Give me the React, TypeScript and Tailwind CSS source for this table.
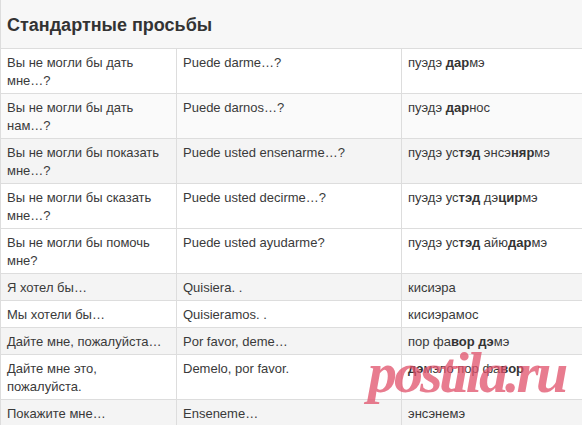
import React from "react";

type Part = string | { b: string };

const rows: { ru: string; es: string; tr: Part[]; bg: string }[] = [
  { ru: "Вы не могли бы дать мне…?", es: "Puede darme…?", tr: ["пуэдэ ", { b: "дар" }, "мэ"], bg: "bg-white" },
  { ru: "Вы не могли бы дать нам…?", es: "Puede darnos…?", tr: ["пуэдэ ", { b: "дар" }, "нос"], bg: "bg-[#fafafa]" },
  { ru: "Вы не могли бы показать мне…?", es: "Puede usted ensenarme…?", tr: ["пуэдэ ус", { b: "тэд" }, " энсэ", { b: "няр" }, "мэ"], bg: "bg-[#f4f4f4]" },
  { ru: "Вы не могли бы сказать мне…?", es: "Puede usted decirme…?", tr: ["пуэдэ ус", { b: "тэд" }, " дэ", { b: "цир" }, "мэ"], bg: "bg-white" },
  { ru: "Вы не могли бы помочь мне?", es: "Puede usted ayudarme?", tr: ["пуэдэ ус", { b: "тэд" }, " айю", { b: "дар" }, "мэ"], bg: "bg-white" },
  { ru: "Я хотел бы…", es: "Quisiera. .", tr: ["кисиэра"], bg: "bg-[#f4f4f4]" },
  { ru: "Мы хотели бы…", es: "Quisieramos. .", tr: ["кисиэрамос"], bg: "bg-white" },
  { ru: "Дайте мне, пожалуйста…", es: "Por favor, deme…", tr: ["пор фа", { b: "вор дэ" }, "мэ"], bg: "bg-[#f4f4f4]" },
  { ru: "Дайте мне это, пожалуйста.", es: "Demelo, por favor.", tr: [{ b: "дэ" }, "мэло пор фа", { b: "вор" }], bg: "bg-white" },
  { ru: "Покажите мне…", es: "Enseneme…", tr: ["энсэнемэ"], bg: "bg-[#f4f4f4]" },
];

export default function App() {
  return (
    <div className="relative w-[582px] h-[425px] overflow-hidden bg-white text-[#3a3a3a] font-['Liberation_Sans',Arial,sans-serif]">
      <div className="h-[48px] bg-[#f7f7f7] border-l border-[#dddddd] pl-[6px] flex items-center">
        <h2 className="text-[18px] font-bold text-[#333] pt-[3px]">Стандартные просьбы</h2>
      </div>
      <table className="table-fixed border-collapse w-[582px] text-[13px] leading-[18px]">
        <colgroup>
          <col className="w-[176px]" />
          <col className="w-[225px]" />
          <col className="w-[181px]" />
        </colgroup>
        <tbody>
          {rows.map((r, i) => (
            <tr key={i} className={r.bg}>
              <td className="border border-[#dddddd] align-top pl-[6px] pr-[6px] pt-[5px] pb-[3px]">{r.ru}</td>
              <td className="border border-[#dddddd] align-top pl-[6px] pr-[6px] pt-[5px] pb-[3px]">{r.es}</td>
              <td className="border-y border-l border-[#dddddd] align-top pl-[6px] pr-[6px] pt-[5px] pb-[3px]">
                {r.tr.map((p, j) =>
                  typeof p === "string" ? <span key={j}>{p}</span> : <b key={j} className="font-bold text-[#333]">{p.b}</b>
                )}
              </td>
            </tr>
          ))}
        </tbody>
      </table>
      <div className="absolute left-[368px] top-[344px] text-[58px] font-bold italic leading-none tracking-[-3px] text-[#e0506a]/75 font-['Liberation_Serif',Georgia,serif] pointer-events-none">
        postila.ru
      </div>
    </div>
  );
}
